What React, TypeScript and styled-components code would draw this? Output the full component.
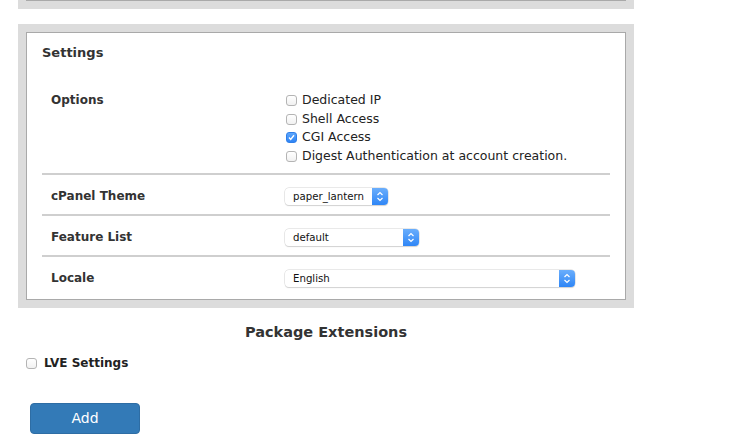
import React from 'react';
import styled, { createGlobalStyle } from 'styled-components';

const GlobalStyle = createGlobalStyle`
  body {
    margin: 0;
    background: #fff;
    font-family: "DejaVu Sans", "Liberation Sans", sans-serif;
    color: #333;
  }
`;

const Page = styled.div`
  width: 616px;
  padding-left: 18px;
`;

const PanelTail = styled.div`
  background: #dcdcdc;
  padding: 0 8px 8px;

  div {
    border-top: 1px solid #a9a9a9;
  }
`;

const Panel = styled.div`
  margin-top: 15px;
  background: #dcdcdc;
  padding: 8px;
`;

const PanelBody = styled.div`
  background: #fff;
  border: 1px solid #a9a9a9;
  padding: 10px 15px 3px;
`;

const PanelTitle = styled.h3`
  margin: 0 0 28px;
  font-size: 13px;
  line-height: 20px;
  font-weight: bold;
`;

const Row = styled.div<{ $first?: boolean }>`
  display: grid;
  grid-template-columns: 243px 1fr;
  align-items: ${(p) => (p.$first ? 'start' : 'center')};
  border-top: ${(p) => (p.$first ? 'none' : '2px solid #cfcfcf')};
  min-height: ${(p) => (p.$first ? '0' : '35px')};
  padding: ${(p) => (p.$first ? '0 0 7px' : '4px 0 0')};
`;

const Label = styled.div`
  padding-left: 9px;
  font-size: 12px;
  font-weight: bold;
  line-height: 19px;
`;

const OptionList = styled.div`
  display: flex;
  flex-direction: column;
  padding-left: 1px;
`;

const Option = styled.label<{ $bold?: boolean }>`
  display: flex;
  align-items: center;
  gap: ${(p) => (p.$bold ? '7px' : '5px')};
  font-size: ${(p) => (p.$bold ? '12px' : '12.5px')};
  font-weight: ${(p) => (p.$bold ? 'bold' : 'normal')};
  line-height: 18.7px;
  color: #222;
`;

const Box = styled.span<{ $checked?: boolean }>`
  width: 11px;
  height: 11px;
  box-sizing: border-box;
  border-radius: 3px;
  border: 1px solid ${(p) => (p.$checked ? '#2f7fe9' : '#b4b4b4')};
  background: ${(p) =>
    p.$checked ? 'linear-gradient(#5ea6fb, #2d84f5)' : 'linear-gradient(#fff, #f1f1f1)'};
  display: flex;
  align-items: center;
  justify-content: center;
  flex-shrink: 0;
`;

const Select = styled.div<{ $width: number }>`
  width: ${(p) => p.$width}px;
  height: 17px;
  box-sizing: border-box;
  display: flex;
  align-items: stretch;
  border-radius: 4px;
  box-shadow: 0 0 0 0.5px #d4d4d4, 0 1px 1px rgba(0, 0, 0, 0.18);
  background: #fff;
  font-size: 10.2px;
  color: #111;
`;

const SelectValue = styled.span`
  flex: 1;
  padding-left: 8px;
  line-height: 17px;
`;

const Stepper = styled.span`
  width: 16px;
  border-radius: 0 4px 4px 0;
  background: linear-gradient(#6aaefc, #2f86f6);
  display: flex;
  align-items: center;
  justify-content: center;
`;

const SectionHeading = styled.h2`
  margin: 14px 0 0;
  text-align: center;
  font-size: 14.5px;
  line-height: 20px;
  font-weight: bold;
  color: #333;
`;

const Extension = styled.div`
  margin: 12px 0 0 8px;
`;

const AddButton = styled.button`
  margin: 30px 0 0 12px;
  width: 110px;
  height: 31px;
  background: #337ab7;
  border: 1px solid #2e6da4;
  border-radius: 4px;
  color: #fff;
  font-family: inherit;
  font-size: 14px;
`;

const Check: React.FC<{ checked?: boolean }> = ({ checked }) => (
  <Box $checked={checked}>
    {checked && (
      <svg width="9" height="9" viewBox="0 0 9 9">
        <path d="M2 4.6 L3.7 6.4 L7 2.2" stroke="#fff" strokeWidth="1.4" fill="none" />
      </svg>
    )}
  </Box>
);

const Dropdown: React.FC<{ value: string; width: number }> = ({ value, width }) => (
  <Select $width={width}>
    <SelectValue>{value}</SelectValue>
    <Stepper>
      <svg width="10" height="13" viewBox="0 0 10 13">
        <path d="M2.5 5 L5 2.5 L7.5 5 M2.5 8 L5 10.5 L7.5 8" stroke="#fff" strokeWidth="1.2" fill="none" />
      </svg>
    </Stepper>
  </Select>
);

const options = [
  { label: 'Dedicated IP', checked: false },
  { label: 'Shell Access', checked: false },
  { label: 'CGI Access', checked: true },
  { label: 'Digest Authentication at account creation.', checked: false },
];

const selects = [
  { label: 'cPanel Theme', value: 'paper_lantern', width: 103 },
  { label: 'Feature List', value: 'default', width: 134 },
  { label: 'Locale', value: 'English', width: 290 },
];

export default function App() {
  return (
    <Page>
      <GlobalStyle />
      <PanelTail>
        <div />
      </PanelTail>
      <Panel>
        <PanelBody>
          <PanelTitle>Settings</PanelTitle>
          <Row $first>
            <Label>Options</Label>
            <OptionList>
              {options.map((o) => (
                <Option key={o.label}>
                  <Check checked={o.checked} />
                  {o.label}
                </Option>
              ))}
            </OptionList>
          </Row>
          {selects.map((s) => (
            <Row key={s.label}>
              <Label>{s.label}</Label>
              <Dropdown value={s.value} width={s.width} />
            </Row>
          ))}
        </PanelBody>
      </Panel>
      <SectionHeading>Package Extensions</SectionHeading>
      <Extension>
        <Option $bold>
          <Check />
          LVE Settings
        </Option>
      </Extension>
      <AddButton>Add</AddButton>
    </Page>
  );
}
